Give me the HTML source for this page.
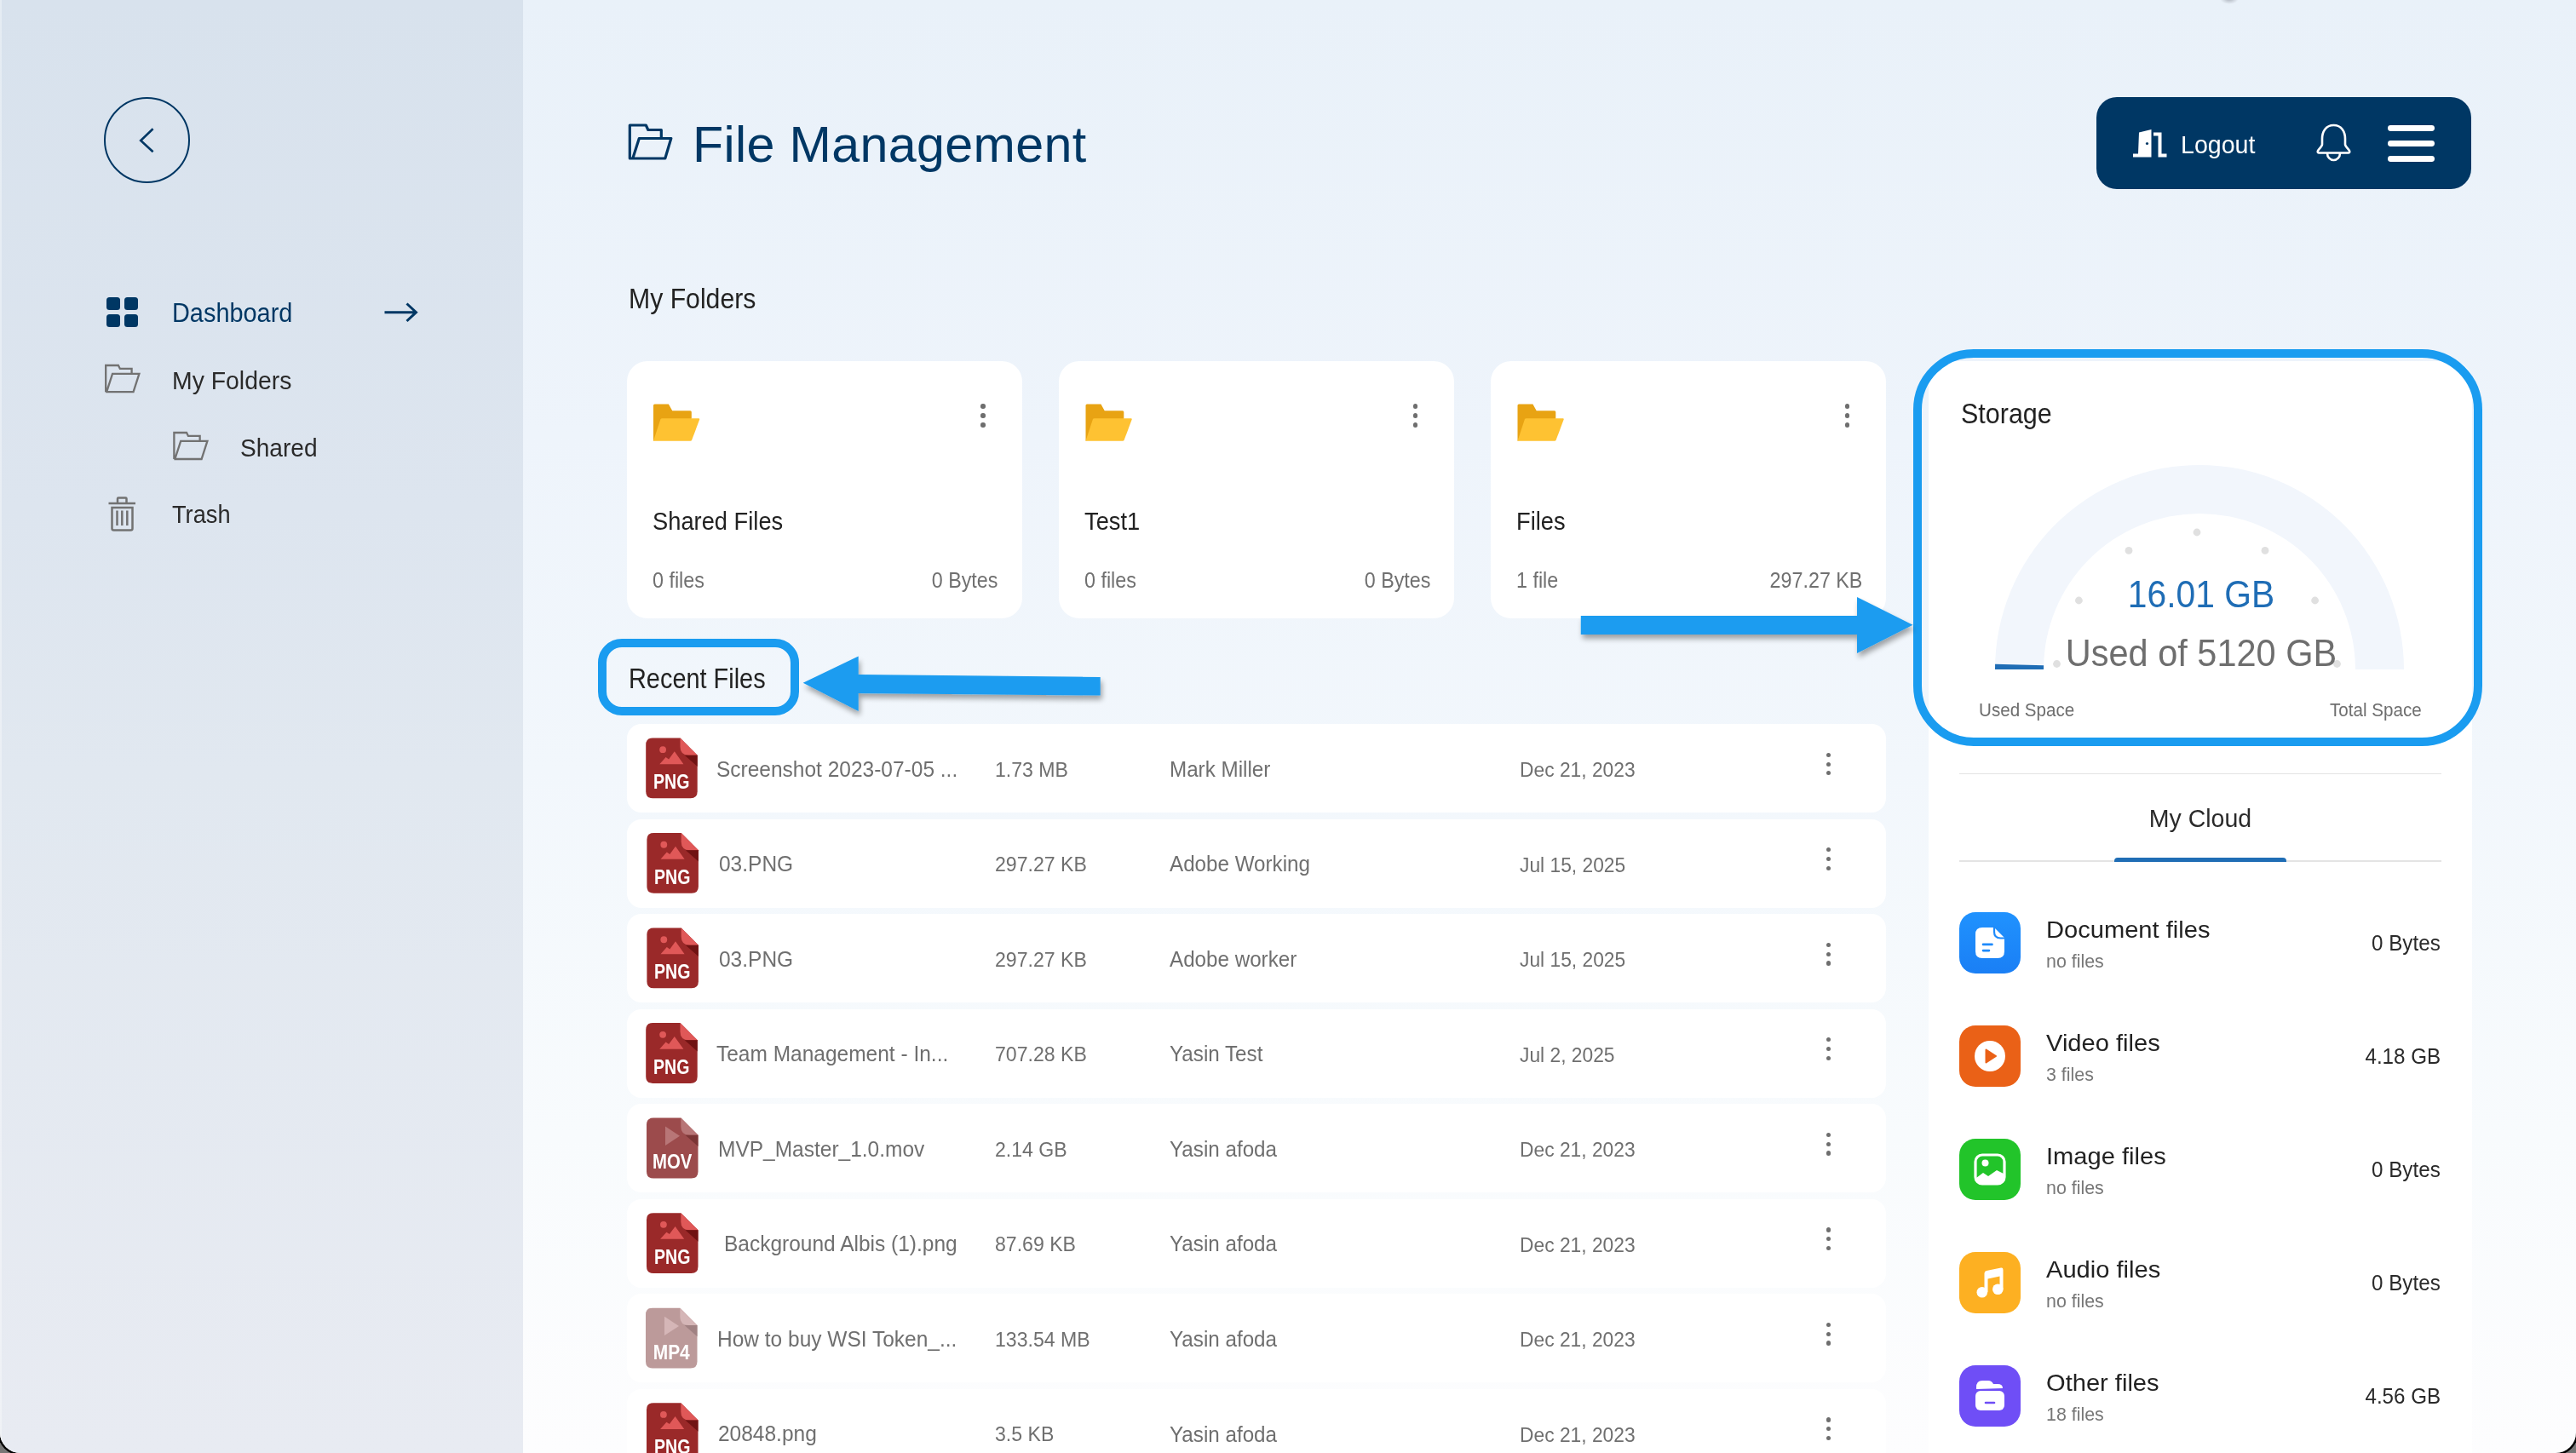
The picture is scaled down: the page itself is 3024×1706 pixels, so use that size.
<!DOCTYPE html>
<html><head><meta charset="utf-8"><style>
html,body{margin:0;padding:0;}
body{width:3024px;height:1706px;overflow:hidden;position:relative;font-family:"Liberation Sans",sans-serif;background:#777;}
.t{position:absolute;white-space:nowrap;line-height:1;}
.a{position:absolute;}
svg{position:absolute;overflow:visible;}
</style></head><body>
<div class="a" style="left:0;top:0;width:3024px;height:1706px;border-radius:0 0 24px 24px;box-shadow:0 0 0 2.5px #000;overflow:hidden;background:linear-gradient(180deg,#e9f1f9 0%,#eef4fb 30%,#f2f7fc 53%,#f8fbfd 78%,#fdfdfe 100%);">
<div class="a" style="left:0;top:0;width:614px;height:1706px;background:linear-gradient(180deg,#d8e2ed 0%,#dde5ef 35%,#e1e8f0 53%,#e8ebf2 100%);"></div>
<div class="a" style="left:0;top:0;width:2px;height:1706px;background:rgba(255,255,255,0.35);"></div>
<div class="a" style="left:2606px;top:-8px;width:22px;height:13px;border-radius:50%;background:radial-gradient(ellipse at center,rgba(140,145,155,0.7) 0%,rgba(160,165,175,0.35) 40%,rgba(200,205,215,0) 70%);"></div>
<div class="a" style="left:122px;top:114px;width:96.5px;height:96.5px;border:2.1px solid #003764;border-radius:50%;"></div>
<svg style="left:0;top:0" width="10" height="10"><polyline points="179.6,151.3 165.2,165 179.6,178.3" fill="none" stroke="#003764" stroke-width="2.6"/></svg>
<div class="a" style="left:125.4px;top:348.8px;width:15.4px;height:15.4px;background:#003764;border-radius:3.5px;"></div>
<div class="a" style="left:146.3px;top:348.8px;width:15.4px;height:15.4px;background:#003764;border-radius:3.5px;"></div>
<div class="a" style="left:125.4px;top:369px;width:15.4px;height:15.4px;background:#003764;border-radius:3.5px;"></div>
<div class="a" style="left:146.3px;top:369px;width:15.4px;height:15.4px;background:#003764;border-radius:3.5px;"></div>
<div class="t" style="left:202px;top:352.07px;font-size:30.63px;color:#003764;transform:scaleX(0.9434);transform-origin:left 50%;">Dashboard</div>
<svg style="left:0;top:0" width="10" height="10"><path d="M451.5 366.7 H488 M477.5 356.5 L488.5 366.7 L477.5 377" fill="none" stroke="#003764" stroke-width="3"/></svg>
<svg style="left:0;top:0" width="10" height="10"><path d="M124.18,460.21 L124.18,428.99 L138.90,428.99 L140.86,432.96 L154.59,432.96 L154.59,438.41 M124.18,460.21 L156.55,460.21 L163.42,438.90 L132.03,438.90 L125.16,460.21" fill="none" stroke="#727272" stroke-width="2.3" stroke-linejoin="miter"/></svg>
<div class="t" style="left:202px;top:432.12px;font-size:30.10px;color:#2a2a2a;transform:scaleX(0.9434);transform-origin:left 50%;">My Folders</div>
<svg style="left:0;top:0" width="10" height="10"><path d="M204.38,539.01 L204.38,507.99 L219.02,507.99 L220.97,511.93 L234.64,511.93 L234.64,517.34 M204.38,539.01 L236.59,539.01 L243.42,517.84 L212.19,517.84 L205.35,539.01" fill="none" stroke="#727272" stroke-width="2.3" stroke-linejoin="miter"/></svg>
<div class="t" style="left:281.5px;top:510.69px;font-size:29.79px;color:#2a2a2a;transform:scaleX(0.9434);transform-origin:left 50%;">Shared</div>
<svg style="left:0;top:0" width="10" height="10"><g fill="none" stroke="#727272" stroke-width="2.5"><path d="M127.5 591 H159 M138 591 V585.5 Q138 584.5 139 584.5 H147.5 Q148.5 584.5 148.5 585.5 V591 M131.5 596 H155.5 V620.5 Q155.5 622.5 153.5 622.5 H133.5 Q131.5 622.5 131.5 620.5 Z M137.5 599.5 V617 M143.3 599.5 V617 M149.3 599.5 V617"/></g></svg>
<div class="t" style="left:201.7px;top:590.39px;font-size:28.83px;color:#2a2a2a;transform:scaleX(0.9434);transform-origin:left 50%;">Trash</div>
<svg style="left:0;top:0" width="10" height="10"><path d="M750.80,186.00 L739.30,186.00 L739.30,147.00 L758.30,147.00 L760.80,152.50 L776.30,152.50 L776.30,164.00 M740.80,186.00 L780.80,186.00 L787.80,162.50 L750.30,162.50 L742.80,186.00" fill="none" stroke="#003764" stroke-width="3.2" stroke-linejoin="round"/></svg>
<div class="t" style="left:813px;top:139.69px;font-size:59.20px;color:#003764;letter-spacing:0.35px;">File Management</div>
<div class="a" style="left:2461px;top:114px;width:440px;height:108px;background:#003764;border-radius:24px;"></div>
<svg style="left:0;top:0" width="10" height="10"><g fill="#fff"><path d="M2504 180.5 H2510 L2511 155.5 L2525.5 152 V184.5 H2504 Z"/><path d="M2528 155.5 H2537.5 V180.5 H2543.5 V184.5 H2533.5 V159.5 H2528 Z"/></g><circle cx="2520.5" cy="168.5" r="1.6" fill="#003764"/></svg>
<div class="t" style="left:2560px;top:154.82px;font-size:29.74px;color:#ffffff;transform:scaleX(0.9615);transform-origin:left 50%;">Logout</div>
<svg style="left:0;top:0" width="10" height="10"><g fill="none" stroke="#fff" stroke-width="2.6" stroke-linejoin="round"><path d="M2739.5 147 C2730 147 2726 155 2726 163 V169.5 C2726 172 2722 175 2721 177 C2720.3 178.5 2721 179.5 2722.5 179.5 H2756.5 C2758 179.5 2758.7 178.5 2758 177 C2757 175 2753 172 2753 169.5 V163 C2753 155 2749 147 2739.5 147 Z"/><path d="M2732 180 A7.5 8 0 0 0 2747 180"/></g></svg>
<div class="a" style="left:2803px;top:147.3px;width:55px;height:6.8px;background:#fff;border-radius:3.4px;"></div>
<div class="a" style="left:2803px;top:165.0px;width:55px;height:6.8px;background:#fff;border-radius:3.4px;"></div>
<div class="a" style="left:2803px;top:183.2px;width:55px;height:6.8px;background:#fff;border-radius:3.4px;"></div>
<div class="t" style="left:738px;top:333.88px;font-size:33.22px;color:#222222;transform:scaleX(0.9091);transform-origin:left 50%;">My Folders</div>
<div class="a" style="left:735.5px;top:424px;width:464px;height:302px;background:#fff;border-radius:24px;"></div>
<svg style="left:0;top:0" width="10" height="10"><path d="M767.00,517.80 L767.00,476.00 Q767.00,474.50 768.50,474.50 L784.90,474.50 L789.20,482.20 L810.30,482.20 Q811.80,482.20 811.80,483.70 L811.80,491.50 L767.00,517.80 Z" fill="#e8a313"/><path d="M767.00,517.80 L775.30,492.50 Q775.80,491.30 777.20,491.30 L820.20,491.30 Q821.60,491.30 821.20,492.60 L812.20,516.60 Q811.70,517.80 810.40,517.80 Z" fill="#fec232"/></svg>
<div class="a" style="left:1151.30px;top:474.30px;width:5.4px;height:5.4px;border-radius:50%;background:#6e6e6e;"></div>
<div class="a" style="left:1151.30px;top:485.30px;width:5.4px;height:5.4px;border-radius:50%;background:#6e6e6e;"></div>
<div class="a" style="left:1151.30px;top:496.30px;width:5.4px;height:5.4px;border-radius:50%;background:#6e6e6e;"></div>
<div class="t" style="left:765.5px;top:597.45px;font-size:29.95px;color:#222222;transform:scaleX(0.9116);transform-origin:left 50%;">Shared Files</div>
<div class="t" style="left:765.5px;top:667.91px;font-size:26.21px;color:#707070;transform:scaleX(0.8889);transform-origin:left 50%;">0 files</div>
<div class="t" style="right:1852.5px;top:667.91px;font-size:26.21px;color:#707070;transform:scaleX(0.8889);transform-origin:right 50%;">0 Bytes</div>
<div class="a" style="left:1243px;top:424px;width:464px;height:302px;background:#fff;border-radius:24px;"></div>
<svg style="left:0;top:0" width="10" height="10"><path d="M1274.50,517.80 L1274.50,476.00 Q1274.50,474.50 1276.00,474.50 L1292.40,474.50 L1296.70,482.20 L1317.80,482.20 Q1319.30,482.20 1319.30,483.70 L1319.30,491.50 L1274.50,517.80 Z" fill="#e8a313"/><path d="M1274.50,517.80 L1282.80,492.50 Q1283.30,491.30 1284.70,491.30 L1327.70,491.30 Q1329.10,491.30 1328.70,492.60 L1319.70,516.60 Q1319.20,517.80 1317.90,517.80 Z" fill="#fec232"/></svg>
<div class="a" style="left:1658.80px;top:474.30px;width:5.4px;height:5.4px;border-radius:50%;background:#6e6e6e;"></div>
<div class="a" style="left:1658.80px;top:485.30px;width:5.4px;height:5.4px;border-radius:50%;background:#6e6e6e;"></div>
<div class="a" style="left:1658.80px;top:496.30px;width:5.4px;height:5.4px;border-radius:50%;background:#6e6e6e;"></div>
<div class="t" style="left:1273px;top:597.45px;font-size:29.95px;color:#222222;transform:scaleX(0.9116);transform-origin:left 50%;">Test1</div>
<div class="t" style="left:1273px;top:667.91px;font-size:26.21px;color:#707070;transform:scaleX(0.8889);transform-origin:left 50%;">0 files</div>
<div class="t" style="right:1345px;top:667.91px;font-size:26.21px;color:#707070;transform:scaleX(0.8889);transform-origin:right 50%;">0 Bytes</div>
<div class="a" style="left:1750px;top:424px;width:464px;height:302px;background:#fff;border-radius:24px;"></div>
<svg style="left:0;top:0" width="10" height="10"><path d="M1781.50,517.80 L1781.50,476.00 Q1781.50,474.50 1783.00,474.50 L1799.40,474.50 L1803.70,482.20 L1824.80,482.20 Q1826.30,482.20 1826.30,483.70 L1826.30,491.50 L1781.50,517.80 Z" fill="#e8a313"/><path d="M1781.50,517.80 L1789.80,492.50 Q1790.30,491.30 1791.70,491.30 L1834.70,491.30 Q1836.10,491.30 1835.70,492.60 L1826.70,516.60 Q1826.20,517.80 1824.90,517.80 Z" fill="#fec232"/></svg>
<div class="a" style="left:2165.80px;top:474.30px;width:5.4px;height:5.4px;border-radius:50%;background:#6e6e6e;"></div>
<div class="a" style="left:2165.80px;top:485.30px;width:5.4px;height:5.4px;border-radius:50%;background:#6e6e6e;"></div>
<div class="a" style="left:2165.80px;top:496.30px;width:5.4px;height:5.4px;border-radius:50%;background:#6e6e6e;"></div>
<div class="t" style="left:1780px;top:597.45px;font-size:29.95px;color:#222222;transform:scaleX(0.9116);transform-origin:left 50%;">Files</div>
<div class="t" style="left:1780px;top:667.91px;font-size:26.21px;color:#707070;transform:scaleX(0.8889);transform-origin:left 50%;">1 file</div>
<div class="t" style="right:838px;top:667.91px;font-size:26.21px;color:#707070;transform:scaleX(0.8889);transform-origin:right 50%;">297.27 KB</div>
<div class="a" style="left:2264px;top:424px;width:638px;height:1300px;background:#fff;border-radius:24px 24px 0 0;"></div>
<div class="t" style="left:2301.5px;top:469.02px;font-size:33.76px;color:#222222;transform:scaleX(0.9033);transform-origin:left 50%;">Storage</div>
<svg style="left:0;top:0" width="10" height="10"><path d="M2342 786 A240 240 0 0 1 2822 786 L2765 786 A183 183 0 0 0 2399 786 Z" fill="#f2f6fc"/><path d="M2342 786 L2342.1 779.7 L2399.1 781.2 L2399 786 Z" fill="#1f6db5"/></svg>
<svg style="left:0;top:0" width="10" height="10"><circle cx="2414.5" cy="779.5" r="4.4" fill="#e0e0e0"/><circle cx="2440.4" cy="705.0" r="4.4" fill="#e0e0e0"/><circle cx="2499.0" cy="646.4" r="4.4" fill="#e0e0e0"/><circle cx="2579.0" cy="625.0" r="4.4" fill="#e0e0e0"/><circle cx="2659.0" cy="646.4" r="4.4" fill="#e0e0e0"/><circle cx="2717.6" cy="705.0" r="4.4" fill="#e0e0e0"/><circle cx="2743.5" cy="779.5" r="4.4" fill="#e0e0e0"/></svg>
<div class="t" style="left:1584px;width:2000px;text-align:center;top:675.75px;font-size:44.47px;color:#1f6db5;transform:scaleX(0.9174);transform-origin:center 50%;">16.01 GB</div>
<div class="t" style="left:1583.5px;width:2000px;text-align:center;top:745.31px;font-size:44.41px;color:#6e6e6e;transform:scaleX(0.9346);transform-origin:center 50%;">Used of 5120 GB</div>
<div class="t" style="left:2322.5px;top:823.43px;font-size:21.94px;color:#6e6e6e;transform:scaleX(0.9390);transform-origin:left 50%;">Used Space</div>
<div class="t" style="right:181px;top:823.43px;font-size:21.94px;color:#6e6e6e;transform:scaleX(0.9390);transform-origin:right 50%;">Total Space</div>
<div class="a" style="left:2246px;top:409.8px;width:648px;height:446px;border:10px solid #1a9cf0;border-radius:71px;"></div>
<div class="a" style="left:2300px;top:907.5px;width:566px;height:1.5px;background:#e4e4e4;"></div>
<div class="a" style="left:2300px;top:1010px;width:566px;height:1.5px;background:#e4e4e4;"></div>
<div class="a" style="left:2482px;top:1006.5px;width:202px;height:5px;background:#1f6db5;border-radius:4px 4px 0 0;"></div>
<div class="t" style="left:1583px;width:2000px;text-align:center;top:945.91px;font-size:29.64px;color:#2a2a2a;transform:scaleX(0.9615);transform-origin:center 50%;">My Cloud</div>
<div class="a" style="left:2300px;top:1071px;width:72px;height:72px;background:linear-gradient(180deg,#2092fe,#1a7ff5);border-radius:19px;"></div>
<svg style="left:0;top:0" width="10" height="10"><path d="M2319 1097 Q2319 1089 2327 1089 L2341 1089 L2353 1101 L2353 1117 Q2353 1125 2345 1125 L2327 1125 Q2319 1125 2319 1117 Z" fill="#fff"/><path d="M2341 1087 L2341 1094 Q2341 1101.5 2348.5 1101.5 L2355 1101.5" fill="none" stroke="#1e8afb" stroke-width="2.2"/><path d="M2328 1108.9 H2338.5 M2328 1116.1 H2335" stroke="#1e8afb" stroke-width="2.6" stroke-linecap="round"/></svg>
<div class="t" style="left:2402px;top:1077.36px;font-size:28.52px;color:#222222;transform:scaleX(1.0204);transform-origin:left 50%;">Document files</div>
<div class="t" style="left:2402px;top:1117.78px;font-size:22.47px;color:#777777;transform:scaleX(0.9524);transform-origin:left 50%;">no files</div>
<div class="t" style="right:159px;top:1095.49px;font-size:25.41px;color:#2a2a2a;transform:scaleX(0.9524);transform-origin:right 50%;">0 Bytes</div>
<div class="a" style="left:2300px;top:1204px;width:72px;height:72px;background:#ea6117;border-radius:19px;"></div>
<svg style="left:0;top:0" width="10" height="10"><circle cx="2336" cy="1240" r="18" fill="#fff"/><path d="M2331.5 1232.5 L2343 1240 L2331.5 1247.5 Z" fill="#ea6117" stroke="#ea6117" stroke-width="2" stroke-linejoin="round"/></svg>
<div class="t" style="left:2402px;top:1210.36px;font-size:28.52px;color:#222222;transform:scaleX(1.0204);transform-origin:left 50%;">Video files</div>
<div class="t" style="left:2402px;top:1250.78px;font-size:22.47px;color:#777777;transform:scaleX(0.9524);transform-origin:left 50%;">3 files</div>
<div class="t" style="right:159px;top:1228.49px;font-size:25.41px;color:#2a2a2a;transform:scaleX(0.9524);transform-origin:right 50%;">4.18 GB</div>
<div class="a" style="left:2300px;top:1337px;width:72px;height:72px;background:#22c42a;border-radius:19px;"></div>
<svg style="left:0;top:0" width="10" height="10"><rect x="2319" y="1356" width="34" height="34" rx="8" fill="none" stroke="#fff" stroke-width="3.2"/><circle cx="2330.5" cy="1365.5" r="4" fill="#fff"/><path d="M2320 1383 L2328 1377 L2334 1381 L2344 1374 L2352 1378 L2352 1384 Q2352 1389 2347 1389 L2325 1389 Q2320 1389 2320 1384 Z" fill="#fff"/></svg>
<div class="t" style="left:2402px;top:1343.36px;font-size:28.52px;color:#222222;transform:scaleX(1.0204);transform-origin:left 50%;">Image files</div>
<div class="t" style="left:2402px;top:1383.78px;font-size:22.47px;color:#777777;transform:scaleX(0.9524);transform-origin:left 50%;">no files</div>
<div class="t" style="right:159px;top:1361.49px;font-size:25.41px;color:#2a2a2a;transform:scaleX(0.9524);transform-origin:right 50%;">0 Bytes</div>
<div class="a" style="left:2300px;top:1470px;width:72px;height:72px;background:#fdb022;border-radius:19px;"></div>
<svg style="left:0;top:0" width="10" height="10"><path d="M2329.5 1517 V1495 Q2329.5 1492.5 2332 1492 L2349 1488.6 Q2351.5 1488.2 2351.5 1491 V1514 H2347.5 V1498.5 L2333.5 1501.5 V1517 Z" fill="#fff"/><circle cx="2326.8" cy="1517.3" r="6.3" fill="#fff"/><circle cx="2345.3" cy="1513.8" r="6.3" fill="#fff"/></svg>
<div class="t" style="left:2402px;top:1476.36px;font-size:28.52px;color:#222222;transform:scaleX(1.0204);transform-origin:left 50%;">Audio files</div>
<div class="t" style="left:2402px;top:1516.78px;font-size:22.47px;color:#777777;transform:scaleX(0.9524);transform-origin:left 50%;">no files</div>
<div class="t" style="right:159px;top:1494.49px;font-size:25.41px;color:#2a2a2a;transform:scaleX(0.9524);transform-origin:right 50%;">0 Bytes</div>
<div class="a" style="left:2300px;top:1603px;width:72px;height:72px;background:#6f4ef6;border-radius:19px;"></div>
<svg style="left:0;top:0" width="10" height="10"><path d="M2320 1629 Q2320 1621 2327 1621 L2334 1621 Q2338 1621 2340 1625 L2345 1625 Q2351 1625 2351 1630 L2320 1631 Z" fill="#fff"/><rect x="2319" y="1633" width="34" height="23" rx="6" fill="#fff"/><path d="M2331 1647 H2341" stroke="#6f4ef6" stroke-width="2.6" stroke-linecap="round"/></svg>
<div class="t" style="left:2402px;top:1609.36px;font-size:28.52px;color:#222222;transform:scaleX(1.0204);transform-origin:left 50%;">Other files</div>
<div class="t" style="left:2402px;top:1649.78px;font-size:22.47px;color:#777777;transform:scaleX(0.9524);transform-origin:left 50%;">18 files</div>
<div class="t" style="right:159px;top:1627.49px;font-size:25.41px;color:#2a2a2a;transform:scaleX(0.9524);transform-origin:right 50%;">4.56 GB</div>
<div class="t" style="left:738px;top:779.52px;font-size:33.52px;color:#222222;transform:scaleX(0.8621);transform-origin:left 50%;">Recent Files</div>
<div class="a" style="left:702px;top:750px;width:216px;height:69.5px;border:10px solid #1a9cf0;border-radius:28px;"></div>
<div class="a" style="left:735.8px;top:850.0px;width:1478.2px;height:104px;background:#fff;border-radius:17px;"></div>
<svg style="left:0;top:0" width="10" height="10"><path d="M766.2 866.5 L798.5 866.5 L818.7 886.7 L818.7 929.3 Q818.7 937.3 810.7 937.3 L766.2 937.3 Q758.2 937.3 758.2 929.3 L758.2 874.5 Q758.2 866.5 766.2 866.5 Z" fill="#9a2929"/><path d="M798.5 866.5 L818.7 886.7 L808.7 886.7 Q798.5 886.7 798.5 876.7 Z" fill="#e05858"/><path d="M803.7 886.7 L818.7 886.7 L818.7 900.0 Z" fill="#701313"/><circle cx="778.1" cy="880.2" r="3.9" fill="#e05858"/><path d="M774.3000000000001 897.2 L781.6 889.0 L785.1 891.4 L791.8000000000001 882.3 L802.4000000000001 897.2 Z" fill="#e05858"/></svg>
<div class="t" style="left:758.2px;width:60.5px;text-align:center;top:907.33px;font-size:23px;font-weight:700;color:#fff;transform:scaleX(0.85);transform-origin:50% 50%;">PNG</div>
<div class="t" style="left:841px;top:890.52px;font-size:25.73px;color:#6f6f6f;transform:scaleX(0.9524);transform-origin:left 50%;">Screenshot 2023-07-05 ...</div>
<div class="t" style="left:1168px;top:891.77px;font-size:24.26px;color:#6f6f6f;transform:scaleX(0.9524);transform-origin:left 50%;">1.73 MB</div>
<div class="t" style="left:1373px;top:890.79px;font-size:25.41px;color:#6f6f6f;transform:scaleX(0.9524);transform-origin:left 50%;">Mark Miller</div>
<div class="t" style="left:1783.6px;top:892.03px;font-size:23.94px;color:#6f6f6f;transform:scaleX(0.9524);transform-origin:left 50%;">Dec 21, 2023</div>
<div class="a" style="left:2143.70px;top:883.70px;width:5.2px;height:5.2px;border-radius:50%;background:#6e6e6e;"></div>
<div class="a" style="left:2143.70px;top:894.50px;width:5.2px;height:5.2px;border-radius:50%;background:#6e6e6e;"></div>
<div class="a" style="left:2143.70px;top:905.30px;width:5.2px;height:5.2px;border-radius:50%;background:#6e6e6e;"></div>
<div class="a" style="left:735.8px;top:961.5px;width:1478.2px;height:104px;background:#fff;border-radius:17px;"></div>
<svg style="left:0;top:0" width="10" height="10"><path d="M767.4 978.03 L799.6999999999999 978.03 L819.9 998.23 L819.9 1040.83 Q819.9 1048.83 811.9 1048.83 L767.4 1048.83 Q759.4 1048.83 759.4 1040.83 L759.4 986.03 Q759.4 978.03 767.4 978.03 Z" fill="#9a2929"/><path d="M799.6999999999999 978.03 L819.9 998.23 L809.9 998.23 Q799.6999999999999 998.23 799.6999999999999 988.23 Z" fill="#e05858"/><path d="M804.9 998.23 L819.9 998.23 L819.9 1011.53 Z" fill="#701313"/><circle cx="779.3" cy="991.73" r="3.9" fill="#e05858"/><path d="M775.5 1008.73 L782.8 1000.53 L786.3 1002.93 L793.0 993.8299999999999 L803.6 1008.73 Z" fill="#e05858"/></svg>
<div class="t" style="left:759.4px;width:60.5px;text-align:center;top:1018.86px;font-size:23px;font-weight:700;color:#fff;transform:scaleX(0.85);transform-origin:50% 50%;">PNG</div>
<div class="t" style="left:843.5px;top:1002.05px;font-size:25.73px;color:#6f6f6f;transform:scaleX(0.9524);transform-origin:left 50%;">03.PNG</div>
<div class="t" style="left:1168px;top:1003.30px;font-size:24.26px;color:#6f6f6f;transform:scaleX(0.9524);transform-origin:left 50%;">297.27 KB</div>
<div class="t" style="left:1373px;top:1002.32px;font-size:25.41px;color:#6f6f6f;transform:scaleX(0.9524);transform-origin:left 50%;">Adobe Working</div>
<div class="t" style="left:1783.6px;top:1003.56px;font-size:23.94px;color:#6f6f6f;transform:scaleX(0.9524);transform-origin:left 50%;">Jul 15, 2025</div>
<div class="a" style="left:2143.70px;top:995.23px;width:5.2px;height:5.2px;border-radius:50%;background:#6e6e6e;"></div>
<div class="a" style="left:2143.70px;top:1006.03px;width:5.2px;height:5.2px;border-radius:50%;background:#6e6e6e;"></div>
<div class="a" style="left:2143.70px;top:1016.83px;width:5.2px;height:5.2px;border-radius:50%;background:#6e6e6e;"></div>
<div class="a" style="left:735.8px;top:1073.1px;width:1478.2px;height:104px;background:#fff;border-radius:17px;"></div>
<svg style="left:0;top:0" width="10" height="10"><path d="M767.4 1089.56 L799.6999999999999 1089.56 L819.9 1109.76 L819.9 1152.36 Q819.9 1160.36 811.9 1160.36 L767.4 1160.36 Q759.4 1160.36 759.4 1152.36 L759.4 1097.56 Q759.4 1089.56 767.4 1089.56 Z" fill="#9a2929"/><path d="M799.6999999999999 1089.56 L819.9 1109.76 L809.9 1109.76 Q799.6999999999999 1109.76 799.6999999999999 1099.76 Z" fill="#e05858"/><path d="M804.9 1109.76 L819.9 1109.76 L819.9 1123.06 Z" fill="#701313"/><circle cx="779.3" cy="1103.26" r="3.9" fill="#e05858"/><path d="M775.5 1120.26 L782.8 1112.06 L786.3 1114.46 L793.0 1105.36 L803.6 1120.26 Z" fill="#e05858"/></svg>
<div class="t" style="left:759.4px;width:60.5px;text-align:center;top:1130.39px;font-size:23px;font-weight:700;color:#fff;transform:scaleX(0.85);transform-origin:50% 50%;">PNG</div>
<div class="t" style="left:843.5px;top:1113.58px;font-size:25.73px;color:#6f6f6f;transform:scaleX(0.9524);transform-origin:left 50%;">03.PNG</div>
<div class="t" style="left:1168px;top:1114.83px;font-size:24.26px;color:#6f6f6f;transform:scaleX(0.9524);transform-origin:left 50%;">297.27 KB</div>
<div class="t" style="left:1373px;top:1113.85px;font-size:25.41px;color:#6f6f6f;transform:scaleX(0.9524);transform-origin:left 50%;">Adobe worker</div>
<div class="t" style="left:1783.6px;top:1115.09px;font-size:23.94px;color:#6f6f6f;transform:scaleX(0.9524);transform-origin:left 50%;">Jul 15, 2025</div>
<div class="a" style="left:2143.70px;top:1106.76px;width:5.2px;height:5.2px;border-radius:50%;background:#6e6e6e;"></div>
<div class="a" style="left:2143.70px;top:1117.56px;width:5.2px;height:5.2px;border-radius:50%;background:#6e6e6e;"></div>
<div class="a" style="left:2143.70px;top:1128.36px;width:5.2px;height:5.2px;border-radius:50%;background:#6e6e6e;"></div>
<div class="a" style="left:735.8px;top:1184.6px;width:1478.2px;height:104px;background:#fff;border-radius:17px;"></div>
<svg style="left:0;top:0" width="10" height="10"><path d="M766.2 1201.0900000000001 L798.5 1201.0900000000001 L818.7 1221.2900000000002 L818.7 1263.89 Q818.7 1271.89 810.7 1271.89 L766.2 1271.89 Q758.2 1271.89 758.2 1263.89 L758.2 1209.0900000000001 Q758.2 1201.0900000000001 766.2 1201.0900000000001 Z" fill="#9a2929"/><path d="M798.5 1201.0900000000001 L818.7 1221.2900000000002 L808.7 1221.2900000000002 Q798.5 1221.2900000000002 798.5 1211.2900000000002 Z" fill="#e05858"/><path d="M803.7 1221.2900000000002 L818.7 1221.2900000000002 L818.7 1234.5900000000001 Z" fill="#701313"/><circle cx="778.1" cy="1214.7900000000002" r="3.9" fill="#e05858"/><path d="M774.3000000000001 1231.7900000000002 L781.6 1223.5900000000001 L785.1 1225.9900000000002 L791.8000000000001 1216.89 L802.4000000000001 1231.7900000000002 Z" fill="#e05858"/></svg>
<div class="t" style="left:758.2px;width:60.5px;text-align:center;top:1241.92px;font-size:23px;font-weight:700;color:#fff;transform:scaleX(0.85);transform-origin:50% 50%;">PNG</div>
<div class="t" style="left:841px;top:1225.11px;font-size:25.73px;color:#6f6f6f;transform:scaleX(0.9524);transform-origin:left 50%;">Team Management - In...</div>
<div class="t" style="left:1168px;top:1226.36px;font-size:24.26px;color:#6f6f6f;transform:scaleX(0.9524);transform-origin:left 50%;">707.28 KB</div>
<div class="t" style="left:1373px;top:1225.38px;font-size:25.41px;color:#6f6f6f;transform:scaleX(0.9524);transform-origin:left 50%;">Yasin Test</div>
<div class="t" style="left:1783.6px;top:1226.62px;font-size:23.94px;color:#6f6f6f;transform:scaleX(0.9524);transform-origin:left 50%;">Jul 2, 2025</div>
<div class="a" style="left:2143.70px;top:1218.29px;width:5.2px;height:5.2px;border-radius:50%;background:#6e6e6e;"></div>
<div class="a" style="left:2143.70px;top:1229.09px;width:5.2px;height:5.2px;border-radius:50%;background:#6e6e6e;"></div>
<div class="a" style="left:2143.70px;top:1239.89px;width:5.2px;height:5.2px;border-radius:50%;background:#6e6e6e;"></div>
<div class="a" style="left:735.8px;top:1296.1px;width:1478.2px;height:104px;background:#fff;border-radius:17px;"></div>
<svg style="left:0;top:0" width="10" height="10"><path d="M767 1312.62 L799.3 1312.62 L819.5 1332.82 L819.5 1375.4199999999998 Q819.5 1383.4199999999998 811.5 1383.4199999999998 L767 1383.4199999999998 Q759 1383.4199999999998 759 1375.4199999999998 L759 1320.62 Q759 1312.62 767 1312.62 Z" fill="#9c4b4c"/><path d="M799.3 1312.62 L819.5 1332.82 L809.5 1332.82 Q799.3 1332.82 799.3 1322.82 Z" fill="#b87677"/><path d="M804.5 1332.82 L819.5 1332.82 L819.5 1346.12 Z" fill="#7b3535"/><path d="M781 1322.62 L798 1333.82 L781 1345.02 Z" fill="#b87677"/></svg>
<div class="t" style="left:759px;width:60.5px;text-align:center;top:1353.45px;font-size:23px;font-weight:700;color:#fff;transform:scaleX(0.885);transform-origin:50% 50%;">MOV</div>
<div class="t" style="left:843px;top:1336.64px;font-size:25.73px;color:#6f6f6f;transform:scaleX(0.9524);transform-origin:left 50%;">MVP_Master_1.0.mov</div>
<div class="t" style="left:1168px;top:1337.89px;font-size:24.26px;color:#6f6f6f;transform:scaleX(0.9524);transform-origin:left 50%;">2.14 GB</div>
<div class="t" style="left:1373px;top:1336.91px;font-size:25.41px;color:#6f6f6f;transform:scaleX(0.9524);transform-origin:left 50%;">Yasin afoda</div>
<div class="t" style="left:1783.6px;top:1338.15px;font-size:23.94px;color:#6f6f6f;transform:scaleX(0.9524);transform-origin:left 50%;">Dec 21, 2023</div>
<div class="a" style="left:2143.70px;top:1329.82px;width:5.2px;height:5.2px;border-radius:50%;background:#6e6e6e;"></div>
<div class="a" style="left:2143.70px;top:1340.62px;width:5.2px;height:5.2px;border-radius:50%;background:#6e6e6e;"></div>
<div class="a" style="left:2143.70px;top:1351.42px;width:5.2px;height:5.2px;border-radius:50%;background:#6e6e6e;"></div>
<div class="a" style="left:735.8px;top:1407.7px;width:1478.2px;height:104px;background:#fff;border-radius:17px;"></div>
<svg style="left:0;top:0" width="10" height="10"><path d="M767 1424.15 L799.3 1424.15 L819.5 1444.3500000000001 L819.5 1486.95 Q819.5 1494.95 811.5 1494.95 L767 1494.95 Q759 1494.95 759 1486.95 L759 1432.15 Q759 1424.15 767 1424.15 Z" fill="#9a2929"/><path d="M799.3 1424.15 L819.5 1444.3500000000001 L809.5 1444.3500000000001 Q799.3 1444.3500000000001 799.3 1434.3500000000001 Z" fill="#e05858"/><path d="M804.5 1444.3500000000001 L819.5 1444.3500000000001 L819.5 1457.65 Z" fill="#701313"/><circle cx="778.9" cy="1437.8500000000001" r="3.9" fill="#e05858"/><path d="M775.1 1454.8500000000001 L782.4 1446.65 L785.9 1449.0500000000002 L792.6 1439.95 L803.2 1454.8500000000001 Z" fill="#e05858"/></svg>
<div class="t" style="left:759px;width:60.5px;text-align:center;top:1464.98px;font-size:23px;font-weight:700;color:#fff;transform:scaleX(0.85);transform-origin:50% 50%;">PNG</div>
<div class="t" style="left:850px;top:1448.17px;font-size:25.73px;color:#6f6f6f;transform:scaleX(0.9524);transform-origin:left 50%;">Background Albis (1).png</div>
<div class="t" style="left:1168px;top:1449.42px;font-size:24.26px;color:#6f6f6f;transform:scaleX(0.9524);transform-origin:left 50%;">87.69 KB</div>
<div class="t" style="left:1373px;top:1448.44px;font-size:25.41px;color:#6f6f6f;transform:scaleX(0.9524);transform-origin:left 50%;">Yasin afoda</div>
<div class="t" style="left:1783.6px;top:1449.68px;font-size:23.94px;color:#6f6f6f;transform:scaleX(0.9524);transform-origin:left 50%;">Dec 21, 2023</div>
<div class="a" style="left:2143.70px;top:1441.35px;width:5.2px;height:5.2px;border-radius:50%;background:#6e6e6e;"></div>
<div class="a" style="left:2143.70px;top:1452.15px;width:5.2px;height:5.2px;border-radius:50%;background:#6e6e6e;"></div>
<div class="a" style="left:2143.70px;top:1462.95px;width:5.2px;height:5.2px;border-radius:50%;background:#6e6e6e;"></div>
<div class="a" style="left:735.8px;top:1519.2px;width:1478.2px;height:104px;background:#fff;border-radius:17px;"></div>
<svg style="left:0;top:0" width="10" height="10"><path d="M766 1535.68 L798.3 1535.68 L818.5 1555.88 L818.5 1598.48 Q818.5 1606.48 810.5 1606.48 L766 1606.48 Q758 1606.48 758 1598.48 L758 1543.68 Q758 1535.68 766 1535.68 Z" fill="#bc9a9a"/><path d="M798.3 1535.68 L818.5 1555.88 L808.5 1555.88 Q798.3 1555.88 798.3 1545.88 Z" fill="#d5b6b7"/><path d="M803.5 1555.88 L818.5 1555.88 L818.5 1569.18 Z" fill="#a08182"/><path d="M780 1545.68 L797 1556.88 L780 1568.0800000000002 Z" fill="#d5b6b7"/></svg>
<div class="t" style="left:758px;width:60.5px;text-align:center;top:1576.51px;font-size:23px;font-weight:700;color:#fff;transform:scaleX(0.91);transform-origin:50% 50%;">MP4</div>
<div class="t" style="left:841.5px;top:1559.70px;font-size:25.73px;color:#6f6f6f;transform:scaleX(0.9524);transform-origin:left 50%;">How to buy WSI Token_...</div>
<div class="t" style="left:1168px;top:1560.95px;font-size:24.26px;color:#6f6f6f;transform:scaleX(0.9524);transform-origin:left 50%;">133.54 MB</div>
<div class="t" style="left:1373px;top:1559.97px;font-size:25.41px;color:#6f6f6f;transform:scaleX(0.9524);transform-origin:left 50%;">Yasin afoda</div>
<div class="t" style="left:1783.6px;top:1561.21px;font-size:23.94px;color:#6f6f6f;transform:scaleX(0.9524);transform-origin:left 50%;">Dec 21, 2023</div>
<div class="a" style="left:2143.70px;top:1552.88px;width:5.2px;height:5.2px;border-radius:50%;background:#6e6e6e;"></div>
<div class="a" style="left:2143.70px;top:1563.68px;width:5.2px;height:5.2px;border-radius:50%;background:#6e6e6e;"></div>
<div class="a" style="left:2143.70px;top:1574.48px;width:5.2px;height:5.2px;border-radius:50%;background:#6e6e6e;"></div>
<div class="a" style="left:735.8px;top:1630.7px;width:1478.2px;height:104px;background:#fff;border-radius:17px;"></div>
<svg style="left:0;top:0" width="10" height="10"><path d="M767 1647.21 L799.3 1647.21 L819.5 1667.41 L819.5 1710.01 Q819.5 1718.01 811.5 1718.01 L767 1718.01 Q759 1718.01 759 1710.01 L759 1655.21 Q759 1647.21 767 1647.21 Z" fill="#9a2929"/><path d="M799.3 1647.21 L819.5 1667.41 L809.5 1667.41 Q799.3 1667.41 799.3 1657.41 Z" fill="#e05858"/><path d="M804.5 1667.41 L819.5 1667.41 L819.5 1680.71 Z" fill="#701313"/><circle cx="778.9" cy="1660.91" r="3.9" fill="#e05858"/><path d="M775.1 1677.91 L782.4 1669.71 L785.9 1672.1100000000001 L792.6 1663.01 L803.2 1677.91 Z" fill="#e05858"/></svg>
<div class="t" style="left:759px;width:60.5px;text-align:center;top:1688.04px;font-size:23px;font-weight:700;color:#fff;transform:scaleX(0.85);transform-origin:50% 50%;">PNG</div>
<div class="t" style="left:843px;top:1671.23px;font-size:25.73px;color:#6f6f6f;transform:scaleX(0.9524);transform-origin:left 50%;">20848.png</div>
<div class="t" style="left:1168px;top:1672.48px;font-size:24.26px;color:#6f6f6f;transform:scaleX(0.9524);transform-origin:left 50%;">3.5 KB</div>
<div class="t" style="left:1373px;top:1671.50px;font-size:25.41px;color:#6f6f6f;transform:scaleX(0.9524);transform-origin:left 50%;">Yasin afoda</div>
<div class="t" style="left:1783.6px;top:1672.74px;font-size:23.94px;color:#6f6f6f;transform:scaleX(0.9524);transform-origin:left 50%;">Dec 21, 2023</div>
<div class="a" style="left:2143.70px;top:1664.41px;width:5.2px;height:5.2px;border-radius:50%;background:#6e6e6e;"></div>
<div class="a" style="left:2143.70px;top:1675.21px;width:5.2px;height:5.2px;border-radius:50%;background:#6e6e6e;"></div>
<div class="a" style="left:2143.70px;top:1686.01px;width:5.2px;height:5.2px;border-radius:50%;background:#6e6e6e;"></div>
<svg style="left:0;top:0" width="10" height="10"><defs><filter id="sh" x="-20%" y="-50%" width="140%" height="200%"><feGaussianBlur in="SourceAlpha" stdDeviation="3"/><feOffset dx="2" dy="5"/><feComponentTransfer><feFuncA type="linear" slope="0.35"/></feComponentTransfer><feMerge><feMergeNode/><feMergeNode in="SourceGraphic"/></feMerge></filter></defs><path filter="url(#sh)" d="M942.7 801.7 L1007.7 770.4 L1007.7 792 L1291.7 795 L1291.7 816.6 L1007.7 814 L1007.7 835 Z" fill="#1a9cf0"/><path filter="url(#sh)" d="M1855.8 722.9 L2180 722.9 L2180 700.9 L2245.5 733.8 L2180 766.9 L2180 744.9 L1855.8 744.9 Z" fill="#1a9cf0"/></svg>
</div>

</body></html>
